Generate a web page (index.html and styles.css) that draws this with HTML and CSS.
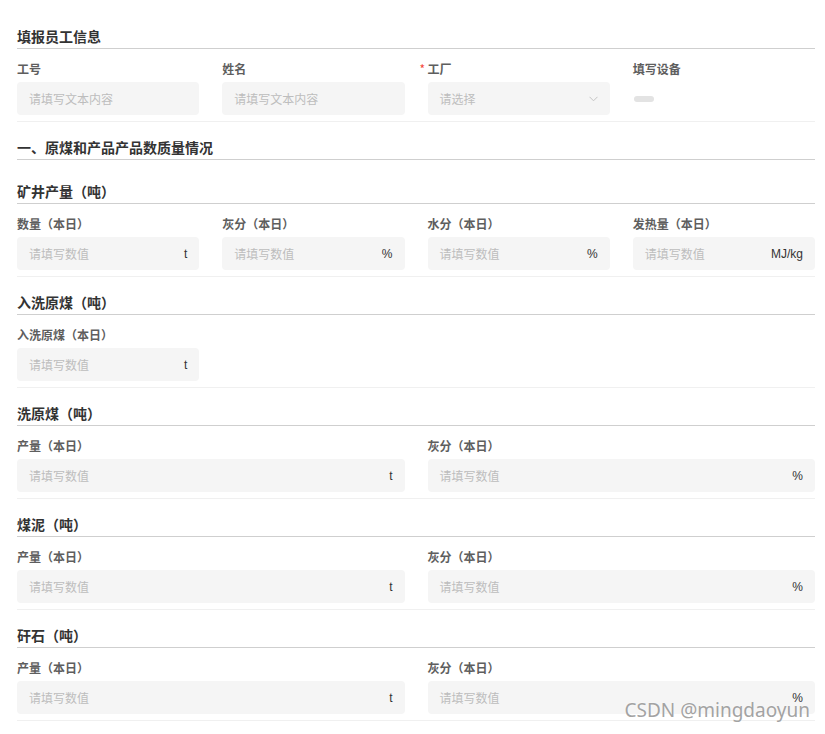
FILE: index.html
```html
<!DOCTYPE html>
<html lang="zh-CN">
<head>
<meta charset="utf-8">
<title>填报员工信息</title>
<link rel="stylesheet" href="styles.css">
</head>
<body>
<div class="page">
  <div class="sec-head first">填报员工信息</div>
  <div class="row cols-4">
    <div class="field">
      <div class="label">工号</div>
      <div class="input"><span class="ph">请填写文本内容</span></div>
    </div>
    <div class="field">
      <div class="label">姓名</div>
      <div class="input"><span class="ph">请填写文本内容</span></div>
    </div>
    <div class="field">
      <div class="label"><span class="req">*</span>工厂</div>
      <div class="input"><span class="ph">请选择</span>
        <svg class="chev" width="9" height="6" viewBox="0 0 9 6"><polyline points="0.5,0.8 4.5,4.8 8.5,0.8" fill="none" stroke="#c4c4c4" stroke-width="1"/></svg>
      </div>
    </div>
    <div class="field">
      <div class="label">填写设备</div>
      <div class="device"><span class="pill"></span></div>
    </div>
  </div>

  <div class="sec-head chapter">一、原煤和产品产品数质量情况</div>

  <div class="sec-head">矿井产量（吨）</div>
  <div class="row cols-4">
    <div class="field">
      <div class="label">数量（本日）</div>
      <div class="input"><span class="ph">请填写数值</span><span class="unit">t</span></div>
    </div>
    <div class="field">
      <div class="label">灰分（本日）</div>
      <div class="input"><span class="ph">请填写数值</span><span class="unit">%</span></div>
    </div>
    <div class="field">
      <div class="label">水分（本日）</div>
      <div class="input"><span class="ph">请填写数值</span><span class="unit">%</span></div>
    </div>
    <div class="field">
      <div class="label">发热量（本日）</div>
      <div class="input"><span class="ph">请填写数值</span><span class="unit">MJ/kg</span></div>
    </div>
  </div>

  <div class="sec-head">入洗原煤（吨）</div>
  <div class="row cols-4">
    <div class="field">
      <div class="label">入洗原煤（本日）</div>
      <div class="input"><span class="ph">请填写数值</span><span class="unit">t</span></div>
    </div>
  </div>

  <div class="sec-head">洗原煤（吨）</div>
  <div class="row cols-2">
    <div class="field">
      <div class="label">产量（本日）</div>
      <div class="input"><span class="ph">请填写数值</span><span class="unit">t</span></div>
    </div>
    <div class="field">
      <div class="label">灰分（本日）</div>
      <div class="input"><span class="ph">请填写数值</span><span class="unit">%</span></div>
    </div>
  </div>

  <div class="sec-head">煤泥（吨）</div>
  <div class="row cols-2">
    <div class="field">
      <div class="label">产量（本日）</div>
      <div class="input"><span class="ph">请填写数值</span><span class="unit">t</span></div>
    </div>
    <div class="field">
      <div class="label">灰分（本日）</div>
      <div class="input"><span class="ph">请填写数值</span><span class="unit">%</span></div>
    </div>
  </div>

  <div class="sec-head">矸石（吨）</div>
  <div class="row cols-2">
    <div class="field">
      <div class="label">产量（本日）</div>
      <div class="input"><span class="ph">请填写数值</span><span class="unit">t</span></div>
    </div>
    <div class="field">
      <div class="label">灰分（本日）</div>
      <div class="input"><span class="ph">请填写数值</span><span class="unit">%</span></div>
    </div>
  </div>
</div>
<div class="watermark">CSDN @mingdaoyun</div>
</body>
</html>
```

FILE: styles.css
```css
html, body {
  margin: 0;
  padding: 0;
  background: #ffffff;
}
body {
  position: relative;
  font-family: "Noto Sans CJK SC", "Liberation Sans", sans-serif;
  color: #333333;
}
.page {
  width: 798px;
  margin-left: 17px;
  padding-top: 26px;
  padding-bottom: 40px;
}
.sec-head {
  margin-top: 15px;
  font-size: 14px;
  font-weight: bold;
  line-height: 20px;
  color: #333333;
  padding-bottom: 2px;
  border-bottom: 1px solid #cfcfcf;
}
.sec-head.first {
  margin-top: 0;
}
.sec-head.chapter {
  margin-bottom: 21px;
}
.row {
  display: grid;
  column-gap: 23px;
  padding-top: 10px;
  padding-bottom: 6px;
  border-bottom: 1px solid #f0f0f0;
}
.cols-4 {
  grid-template-columns: repeat(4, 1fr);
}
.cols-2 {
  grid-template-columns: repeat(2, 1fr);
}
.field {
  min-width: 0;
}
.label {
  font-size: 12px;
  font-weight: bold;
  line-height: 20px;
  height: 20px;
  margin-bottom: 3px;
  color: #5e5e5e;
}
.req {
  display: inline-block;
  width: 8px;
  margin-left: -8px;
  color: #f5483b;
  font-weight: normal;
  font-size: 12px;
}
.input {
  height: 33px;
  box-sizing: border-box;
  background: #f5f5f5;
  border-radius: 4px;
  padding: 0 12px;
  display: flex;
  align-items: center;
  justify-content: space-between;
}
.ph {
  font-size: 12px;
  color: #bdbdbd;
}
.unit {
  font-family: "Liberation Sans", sans-serif;
  font-size: 12px;
  color: #333333;
}
.chev {
  display: block;
}
.device {
  height: 33px;
  display: flex;
  align-items: center;
}
.pill {
  display: block;
  width: 20px;
  height: 6px;
  border-radius: 3px;
  background: #e3e3e3;
  margin-left: 1px;
}
.watermark {
  position: absolute;
  top: 696px;
  right: 15px;
  font-family: "Noto Sans", "Open Sans", sans-serif;
  font-size: 19px;
  line-height: 28px;
  color: #a3a3a3;
  text-shadow: 0 0 2px #ffffff;
}
```
